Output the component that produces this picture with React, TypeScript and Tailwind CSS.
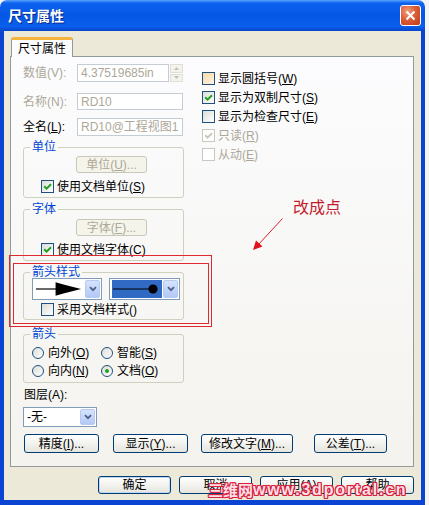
import React from 'react';

type CheckProps = { checked?: boolean; disabled?: boolean; hot?: boolean };

function Check({ checked, disabled, hot }: CheckProps) {
  const box = disabled
    ? 'border-[#cac8bb] bg-white'
    : hot
      ? 'border-[#1c5180] bg-linear-to-br from-[#f8d9a8] to-[#fff4e0]'
      : 'border-[#1c5180] bg-linear-to-br from-[#dcdcd7] to-white';
  return (
    <span className={`w-[13px] h-[13px] shrink-0 border flex items-center justify-center ${box}`}>
      {checked && (
        <svg width="9" height="9" viewBox="0 0 9 9">
          <path d="M1.2 4.2 L3.6 6.6 L8 2.2" fill="none" stroke={disabled ? '#cac8bb' : '#21a121'} strokeWidth="2" />
        </svg>
      )}
    </span>
  );
}

function Radio({ checked }: { checked?: boolean }) {
  return (
    <span className="w-[12px] h-[12px] shrink-0 rounded-full border border-[#1c5180] bg-linear-to-br from-[#dcdcd7] to-white flex items-center justify-center">
      {checked && <span className="w-[4px] h-[4px] rounded-full bg-[#21a121]" />}
    </span>
  );
}

function Chevron() {
  return (
    <span className="w-[15px] h-full shrink-0 border border-[#b6c9f0] rounded-[2px] bg-linear-to-b from-[#d6e3fe] to-[#b2c8f6] flex items-center justify-center">
      <svg width="8" height="6" viewBox="0 0 8 6">
        <path d="M1 1.2 L4 4.2 L7 1.2" fill="none" stroke="#4d6185" strokeWidth="1.8" />
      </svg>
    </span>
  );
}

type BtnProps = { children: React.ReactNode; className: string; disabled?: boolean; def?: boolean };

function Btn({ children, className, disabled, def }: BtnProps) {
  const look = disabled
    ? 'border-[#c9c7ba] bg-[#f5f4ea] text-[#aca899]'
    : def
      ? 'border-[#003c74] bg-linear-to-b from-white to-[#e6e5de] text-black shadow-[inset_0_0_0_1px_#c0d6f6]'
      : 'border-[#003c74] bg-linear-to-b from-white to-[#e6e5de] text-black';
  return (
    <div className={`shrink-0 border rounded-[3px] flex items-center justify-center text-[12px] leading-none ${look} ${className}`}>
      {children}
    </div>
  );
}

export default function App() {
  return (
    <div className="relative w-[429px] h-[505px] overflow-hidden bg-[#f4f4f4] font-['Liberation_Sans','Noto_Sans_CJK_SC',sans-serif] text-[12px] text-black">
      <div className="w-[425px] h-[505px] flex flex-col">
        {/* title bar */}
        <div className="h-[31px] shrink-0 rounded-t-[7px] flex items-center justify-between pl-[8px] pr-[4px] bg-[linear-gradient(to_bottom,#5aa3ff_0%,#0c62ee_10%,#0457e4_50%,#0a5fec_85%,#0645cc_100%)]">
          <span className="text-white font-bold text-[14px] leading-none [text-shadow:1px_1px_#0a2a8a]">尺寸属性</span>
          <span className="w-[21px] h-[21px] rounded-[3px] border border-white bg-[radial-gradient(circle_at_35%_30%,#f0a080_0%,#dc5d37_45%,#c03a17_100%)] flex items-center justify-center">
            <svg width="11" height="11" viewBox="0 0 11 11">
              <path d="M1.5 1.5 L9.5 9.5 M9.5 1.5 L1.5 9.5" stroke="white" strokeWidth="2" />
            </svg>
          </span>
        </div>

        {/* body */}
        <div className="flex-1 bg-[#ece9d8] border-x-[4px] border-b-[5px] border-[#0b44d2] pt-[6px] pl-[6px] flex flex-col">
          <div className="flex">
            <div className="relative z-10 ml-[1px] -mb-[1px] w-[62px] h-[20px] bg-[#fcfcfe] border-x border-[#919b9c] border-t-[3px] border-t-[#f4b43c] rounded-t-[3px] flex items-center justify-center">
              尺寸属性
            </div>
          </div>

          {/* tab panel */}
          <div className="w-[404px] h-[411px] border border-[#919b9c] bg-linear-to-b from-[#fcfcfe] to-[#f4f3ee] flex flex-col">
            <div className="flex pl-[12px]">
              {/* left column */}
              <div className="w-[161px] flex flex-col">
                <div className="mt-[7px] h-[18px] flex items-center">
                  <span className="w-[54px] text-[#aca899]">数值(V):</span>
                  <div className="w-[92px] h-full border border-[#c4cdd6] bg-white flex items-center pl-[3px] text-[#aca899]">4.37519685in</div>
                  <div className="ml-[1px] w-[13px] h-full flex flex-col gap-[1px]">
                    <div className="flex-1 border border-[#e0dfd6] bg-[#f4f3ee] flex items-center justify-center">
                      <svg width="5" height="3" viewBox="0 0 5 3"><path d="M0 3 L2.5 0 L5 3Z" fill="#c2c0b4" /></svg>
                    </div>
                    <div className="flex-1 border border-[#e0dfd6] bg-[#f4f3ee] flex items-center justify-center">
                      <svg width="5" height="3" viewBox="0 0 5 3"><path d="M0 0 L2.5 3 L5 0Z" fill="#c2c0b4" /></svg>
                    </div>
                  </div>
                </div>
                <div className="mt-[11px] h-[17px] flex items-center">
                  <span className="w-[54px] text-[#aca899]">名称(N):</span>
                  <div className="w-[106px] h-full border border-[#c4cdd6] bg-white flex items-center pl-[3px] text-[#aca899]">RD10</div>
                </div>
                <div className="mt-[8px] h-[18px] flex items-center">
                  <span className="w-[54px]">全名(<u>L</u>):</span>
                  <div className="w-[106px] h-full border border-[#c4cdd6] bg-white flex items-center pl-[3px] text-[#aca899]">RD10@工程视图1</div>
                </div>

                <fieldset className="mt-[5px] border border-[#d0d0bf] rounded-[3px] pb-[4px]">
                  <legend className="ml-[6px] px-[2px] leading-[12px] text-[#0046d5]">单位</legend>
                  <div className="pt-[3px] flex flex-col">
                    <Btn disabled className="ml-[52px] w-[71px] h-[17px]">单位(<u>U</u>)...</Btn>
                    <div className="mt-[7px] ml-[17px] h-[13px] flex items-center gap-[3px]">
                      <Check checked />
                      <span>使用文档单位(<u>S</u>)</span>
                    </div>
                  </div>
                </fieldset>

                <fieldset className="mt-[5px] border border-[#d0d0bf] rounded-[3px] pb-[4px]">
                  <legend className="ml-[6px] px-[2px] leading-[12px] text-[#0046d5]">字体</legend>
                  <div className="pt-[4px] flex flex-col">
                    <Btn disabled className="ml-[52px] w-[71px] h-[17px]">字体(<u>F</u>)...</Btn>
                    <div className="mt-[7px] ml-[17px] h-[13px] flex items-center gap-[3px]">
                      <Check checked />
                      <span>使用文档字体(<u>C</u>)</span>
                    </div>
                  </div>
                </fieldset>

                <fieldset className="mt-[5px] border border-[#d0d0bf] rounded-[3px] pb-[3px]">
                  <legend className="ml-[6px] px-[2px] leading-[12px] text-[#0046d5]">箭头样式</legend>
                  <div className="flex flex-col">
                    <div className="h-[22px] flex">
                      <div className="ml-[8px] w-[70px] h-full border border-[#7f9db9] bg-white flex items-center justify-between p-[1px]">
                        <svg width="52" height="18" viewBox="0 0 52 18">
                          <path d="M2 9 H24" stroke="black" strokeWidth="1.2" />
                          <path d="M22 2 L30 4.5 L48 9 L30 13.5 L22 16 Z" fill="black" />
                        </svg>
                        <Chevron />
                      </div>
                      <div className="ml-[7px] w-[71px] h-full border border-[#7f9db9] bg-white flex items-center justify-between p-[1px] pl-[2px]">
                        <div className="w-[50px] h-full bg-[#316ac5] flex items-center">
                          <svg width="50" height="18" viewBox="0 0 50 18">
                            <path d="M1 9 H40" stroke="black" strokeWidth="1.2" />
                            <circle cx="41" cy="9" r="4.6" fill="black" />
                          </svg>
                        </div>
                        <Chevron />
                      </div>
                    </div>
                    <div className="mt-[3px] ml-[17px] h-[13px] flex items-center gap-[3px]">
                      <Check />
                      <span>采用文档样式()</span>
                    </div>
                  </div>
                </fieldset>

                <fieldset className="mt-[8px] border border-[#d0d0bf] rounded-[3px] pb-[5px]">
                  <legend className="ml-[6px] px-[2px] leading-[12px] text-[#0046d5]">箭头</legend>
                  <div className="pt-[7px] flex flex-col gap-[6px] pl-[8px]">
                    <div className="h-[12px] flex items-center">
                      <div className="w-[69px] flex items-center gap-[4px]"><Radio /><span>向外(<u>O</u>)</span></div>
                      <div className="flex items-center gap-[4px]"><Radio /><span>智能(<u>S</u>)</span></div>
                    </div>
                    <div className="h-[12px] flex items-center">
                      <div className="w-[69px] flex items-center gap-[4px]"><Radio /><span>向内(<u>N</u>)</span></div>
                      <div className="flex items-center gap-[4px]"><Radio checked /><span>文档(<u>O</u>)</span></div>
                    </div>
                  </div>
                </fieldset>

                <div className="mt-[5px] ml-[1px] h-[14px] flex items-center">图层(A):</div>
                <div className="mt-[5px] w-[74px] h-[20px] border border-[#7f9db9] bg-white flex items-center justify-between p-[1px] pl-[3px]">
                  <span>-无-</span>
                  <Chevron />
                </div>
              </div>

              {/* right column */}
              <div className="ml-[18px] pt-[12px] flex flex-col">
                <div className="h-[19px] flex items-center gap-[3px]"><Check hot /><span>显示圆括号(<u>W</u>)</span></div>
                <div className="h-[19px] flex items-center gap-[3px]"><Check checked /><span>显示为双制尺寸(<u>S</u>)</span></div>
                <div className="h-[19px] flex items-center gap-[3px]"><Check /><span>显示为检查尺寸(<u>E</u>)</span></div>
                <div className="h-[19px] flex items-center gap-[3px] text-[#aca899]"><Check checked disabled /><span>只读(<u>R</u>)</span></div>
                <div className="h-[19px] flex items-center gap-[3px] text-[#aca899]"><Check disabled /><span>从动(<u>E</u>)</span></div>
              </div>
            </div>

            <div className="mt-[7px] pl-[13px] flex">
              <Btn className="w-[75px] h-[19px]">精度(<u>I</u>)...</Btn>
              <Btn className="ml-[14px] w-[75px] h-[19px]">显示(<u>Y</u>)...</Btn>
              <Btn className="ml-[13px] w-[92px] h-[19px]">修改文字(<u>M</u>)...</Btn>
              <Btn className="ml-[21px] w-[73px] h-[19px]">公差(<u>T</u>)...</Btn>
            </div>
          </div>

          {/* dialog buttons */}
          <div className="mt-[9px] w-[404px] flex justify-end gap-[8px]">
            <Btn def className="w-[73px] h-[18px]">确定</Btn>
            <Btn className="w-[73px] h-[18px]">取消</Btn>
            <Btn className="w-[73px] h-[18px]">应用(<u>A</u>)</Btn>
            <Btn className="w-[73px] h-[18px]">帮助</Btn>
          </div>
        </div>
      </div>

      {/* red annotation over the screenshot */}
      <div className="absolute left-[9px] top-[255px] w-[203px] h-[72px] border border-[#dd2a30] pointer-events-none" />
      <div className="absolute left-[13px] top-[263px] w-[196px] h-[61px] border border-[#dd2a30] pointer-events-none" />
      <div className="absolute left-[293px] top-[199px] text-[16px] leading-[18px] text-[#c41a2a]">改成点</div>
      <svg className="absolute left-0 top-0 pointer-events-none" width="429" height="505" viewBox="0 0 429 505">
        <path d="M282.5 218.5 L258 245" stroke="#d8202c" strokeWidth="1" />
        <path d="M253 250 L256 240.5 L262.5 246.5 Z" fill="#e0101c" />
      </svg>

      {/* watermark */}
      <div className="absolute left-[208px] top-[482px] flex items-end font-bold text-[#ffdfe6] leading-none [text-shadow:1px_0_#d8213c,-1px_0_#d8213c,0_1px_#d8213c,0_-1px_#d8213c,1px_1px_#d8213c,-1px_-1px_#d8213c,1px_-1px_#d8213c,-1px_1px_#d8213c]">
        <span className="text-[15px]">三维网</span>
        <span className="text-[16px] tracking-[1.8px]">www.3dportal.cn</span>
      </div>
    </div>
  );
}
